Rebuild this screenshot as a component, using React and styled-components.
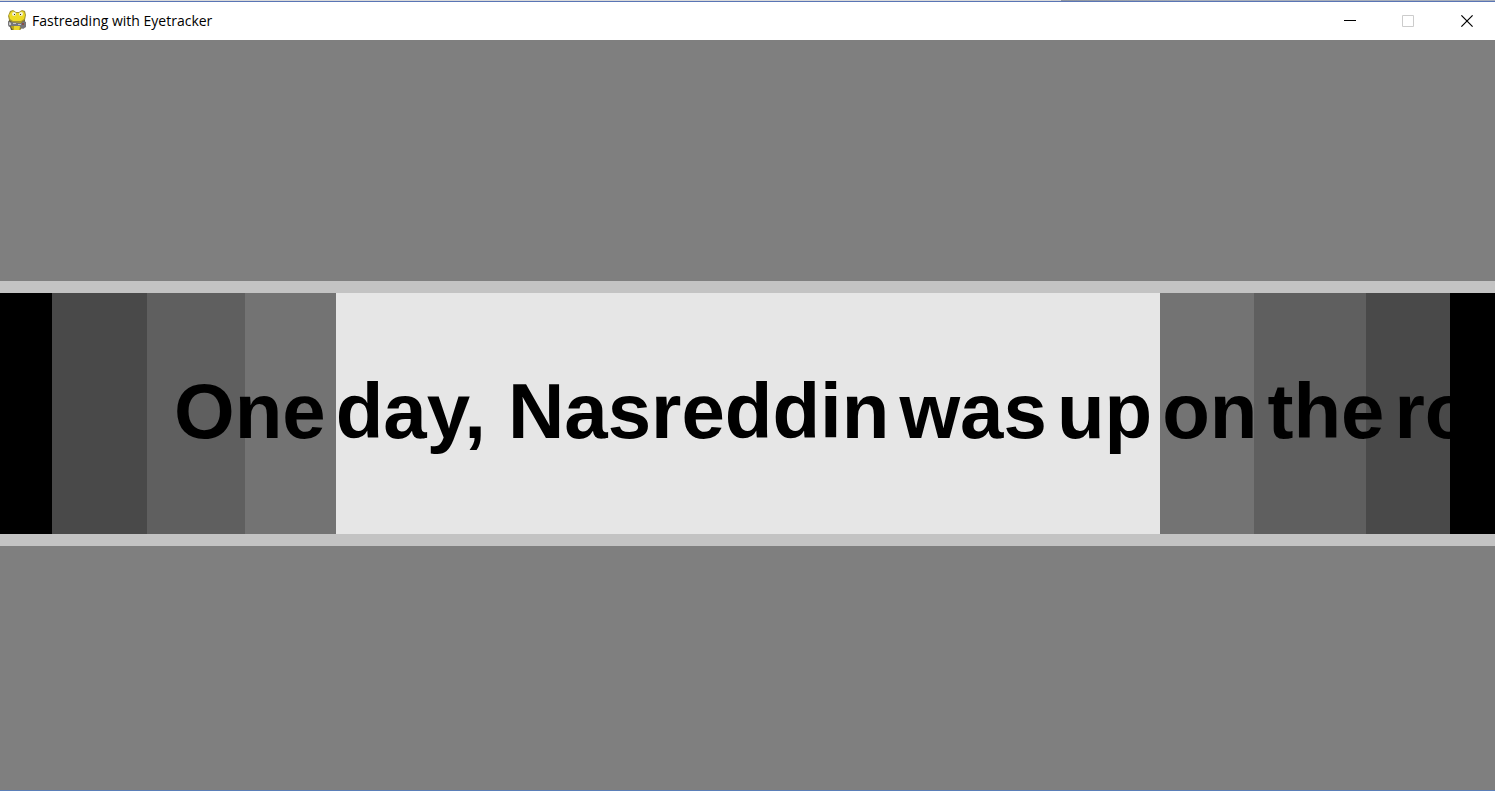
import React from "react";
import styled, { createGlobalStyle } from "styled-components";

const GlobalStyle = createGlobalStyle`
  * { box-sizing: border-box; }
  body { margin: 0; background: #fff; }
`;

const Window = styled.div`
  display: flex;
  flex-direction: column;
  min-height: 100vh;
  margin-right: 5px;
  border-bottom: 1px solid #5b7fb8;
  overflow: hidden;
`;

const Backdrop = styled.div`
  height: 1px;
  flex: none;
  background: linear-gradient(to right, #dadada 71%, #8f959f 71%, #a9afba 80%);
`;

const TitleBar = styled.header`
  display: flex;
  align-items: center;
  flex: none;
  height: 39px;
  padding-left: 7px;
  gap: 5px;
  background: #fff;
  border-top: 1px solid #5a75b5;
`;

const Title = styled.h1`
  flex: 1;
  margin: 0;
  font: 400 14px/20px "Open Sans", "Noto Sans", sans-serif;
  color: #000;
`;

const Controls = styled.div`
  display: flex;
  align-self: stretch;
`;

const ControlButton = styled.button`
  display: grid;
  place-items: center;
  width: 58px;
  padding: 0;
  border: 0;
  background: transparent;
  color: ${(p) => (p.disabled ? "#ccc" : "#000")};
`;

const Stage = styled.main`
  flex: 1;
  display: flex;
  flex-direction: column;
  background: #7f7f7f;
`;

const Space = styled.div`
  flex: ${(p) => p.$grow} 0 0;
`;

const Reader = styled.section`
  position: relative;
  border: solid #c3c3c3;
  border-width: 12px 0;
  overflow: hidden;
`;

const Bands = styled.div`
  display: grid;
  grid-template-columns: 52px 95px 98px 91px 1fr 94px 112px 84px 45px;
  height: 241px;
`;

const Band = styled.div`
  background: ${(p) => p.$shade};
`;

const Sentence = styled.p`
  position: absolute;
  inset: 0;
  display: flex;
  align-items: center;
  gap: 22px;
  margin: 0;
  padding: 0 0 6px 174px;
  font: 700 78px/92px "Liberation Sans", Arial, sans-serif;
  color: #000;
  white-space: nowrap;
`;

const Clause = styled.span`
  display: flex;
  gap: 10px;
`;

const shades = ["#000", "#494949", "#5f5f5f", "#737373", "#e6e6e6", "#737373", "#5f5f5f", "#494949", "#000"];
const clauses = [
  ["One", "day,"],
  ["Nasreddin", "was", "up", "on", "the", "ro"],
];

const SnakeIcon = () => (
  <svg width="20" height="22" viewBox="0 0 20 22" aria-hidden="true">
    <path d="M5 8 2 10 1 14 3 17 4 20h9l2-2 3-3V9l-3-3z" fill="#5d583a" />
    <path d="M6 10h8l1 4-2 6H6l-2-3z" fill="#b9a51a" />
    <path d="M3 1 6 0l3 2h3l3-2 3 1 1 4-1 5-3 2H5l-3-2-1-4z" fill="#a39432" />
    <path d="M4 2 6 1l3 2h3l3-2 2 1 1 3-1 4-3 2H6l-3-2-1-4z" fill="#eedb25" />
    <circle cx="7" cy="4" r="2" fill="#efefdc" />
    <circle cx="14" cy="4" r="2" fill="#efefdc" />
    <path d="M7 4h1v1H7zM13 4h1v1h-1z" fill="#33301c" />
    <path d="m1 11 3 1 10 1 3-2 2 1v5l-3 2-3-2-8-1-3 1-1-2z" fill="#77777a" />
    <path d="m2 12 2 1v2H2zM6 13h3v1H6zM11 14h3v1h-3z" fill="#c5c5c5" />
    <path d="M15 13h2v2h-2z" fill="#8b4e43" />
    <path d="M7 16h6l-1 4H7z" fill="#ead629" />
  </svg>
);

export default function App() {
  return (
    <>
      <GlobalStyle />
      <Window>
        <Backdrop />
        <TitleBar>
          <SnakeIcon />
          <Title>Fastreading with Eyetracker</Title>
          <Controls>
            <ControlButton aria-label="Minimize">
              <svg width="12" height="12" shapeRendering="crispEdges"><path d="M0 5h12v1H0z" fill="currentColor" /></svg>
            </ControlButton>
            <ControlButton aria-label="Maximize" disabled>
              <svg width="12" height="12"><path d="M.5.5h11v11H.5z" fill="none" stroke="currentColor" /></svg>
            </ControlButton>
            <ControlButton aria-label="Close">
              <svg width="14" height="12"><path d="m2.4.4 11.2 11.2M13.6.4 2.4 11.6" stroke="currentColor" strokeWidth="1.2" /></svg>
            </ControlButton>
          </Controls>
        </TitleBar>
        <Stage>
          <Space $grow={241} />
          <Reader>
            <Bands>
              {shades.map((shade, i) => (
                <Band key={i} $shade={shade} />
              ))}
            </Bands>
            <Sentence>
              {clauses.map((words) => (
                <Clause key={words[0]}>
                  {words.map((word) => (
                    <span key={word}>{word}</span>
                  ))}
                </Clause>
              ))}
            </Sentence>
          </Reader>
          <Space $grow={244} />
        </Stage>
      </Window>
    </>
  );
}
